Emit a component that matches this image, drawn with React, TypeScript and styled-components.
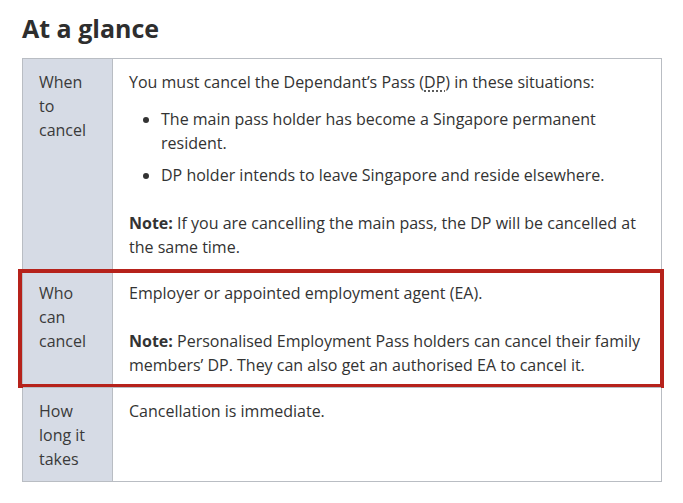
import React from "react";
import styled, { createGlobalStyle } from "styled-components";

const GlobalStyle = createGlobalStyle`
  body {
    margin: 0;
    background: #ffffff;
    font-family: "Open Sans", "Noto Sans", sans-serif;
    color: #333333;
  }
`;

const Page = styled.div`
  padding: 11px 0 0 22px;
`;

const Title = styled.h2`
  margin: 0 0 13px;
  font-size: 25px;
  line-height: 34px;
  font-weight: 700;
  color: #2e2e2e;
`;

const Table = styled.div`
  width: 640px;
  box-sizing: border-box;
  border: 1px solid #b9bdc3;
  font-size: 16px;
  line-height: 24px;
`;

const Row = styled.div<{ $highlight?: boolean }>`
  position: relative;
  display: grid;
  grid-template-columns: 90px 1fr;

  & + & {
    border-top: 1px solid #b9bdc3;
  }

  ${(p) =>
    p.$highlight &&
    `
    &::after {
      content: "";
      position: absolute;
      top: -1px;
      bottom: -1px;
      left: -5px;
      right: -3px;
      border: 4px solid #b6221b;
      pointer-events: none;
    }
  `}
`;

const Head = styled.div`
  background: #d6dbe5;
  border-right: 1px solid #b9bdc3;
  padding: 11px 16px 10px;
  color: #3a3a3a;
`;

const Cell = styled.div`
  padding: 11px 16px 10px;
`;

const Para = styled.p`
  margin: 0;

  & + & {
    margin-top: 24px;
  }
`;

const List = styled.ul`
  margin: 13px 0 24px;
  padding-left: 32px;

  li + li {
    margin-top: 8px;
  }
`;

const Abbr = styled.abbr`
  text-decoration: underline dotted;
  text-underline-offset: 3px;
`;

export default function App() {
  return (
    <>
      <GlobalStyle />
      <Page>
        <Title>At a glance</Title>
        <Table>
          <Row>
            <Head>When to cancel</Head>
            <Cell>
              <Para>
                You must cancel the Dependant’s Pass (<Abbr title="Dependant’s Pass">DP</Abbr>) in these situations:
              </Para>
              <List>
                <li>The main pass holder has become a Singapore permanent resident.</li>
                <li>DP holder intends to leave Singapore and reside elsewhere.</li>
              </List>
              <Para>
                <b>Note:</b> If you are cancelling the main pass, the DP will be cancelled at the same time.
              </Para>
            </Cell>
          </Row>
          <Row $highlight>
            <Head>Who can cancel</Head>
            <Cell>
              <Para>Employer or appointed employment agent (EA).</Para>
              <Para>
                <b>Note:</b> Personalised Employment Pass holders can cancel their family members’ DP. They can also get an authorised EA to cancel it.
              </Para>
            </Cell>
          </Row>
          <Row>
            <Head>How long it takes</Head>
            <Cell>
              <Para>Cancellation is immediate.</Para>
            </Cell>
          </Row>
        </Table>
      </Page>
    </>
  );
}
